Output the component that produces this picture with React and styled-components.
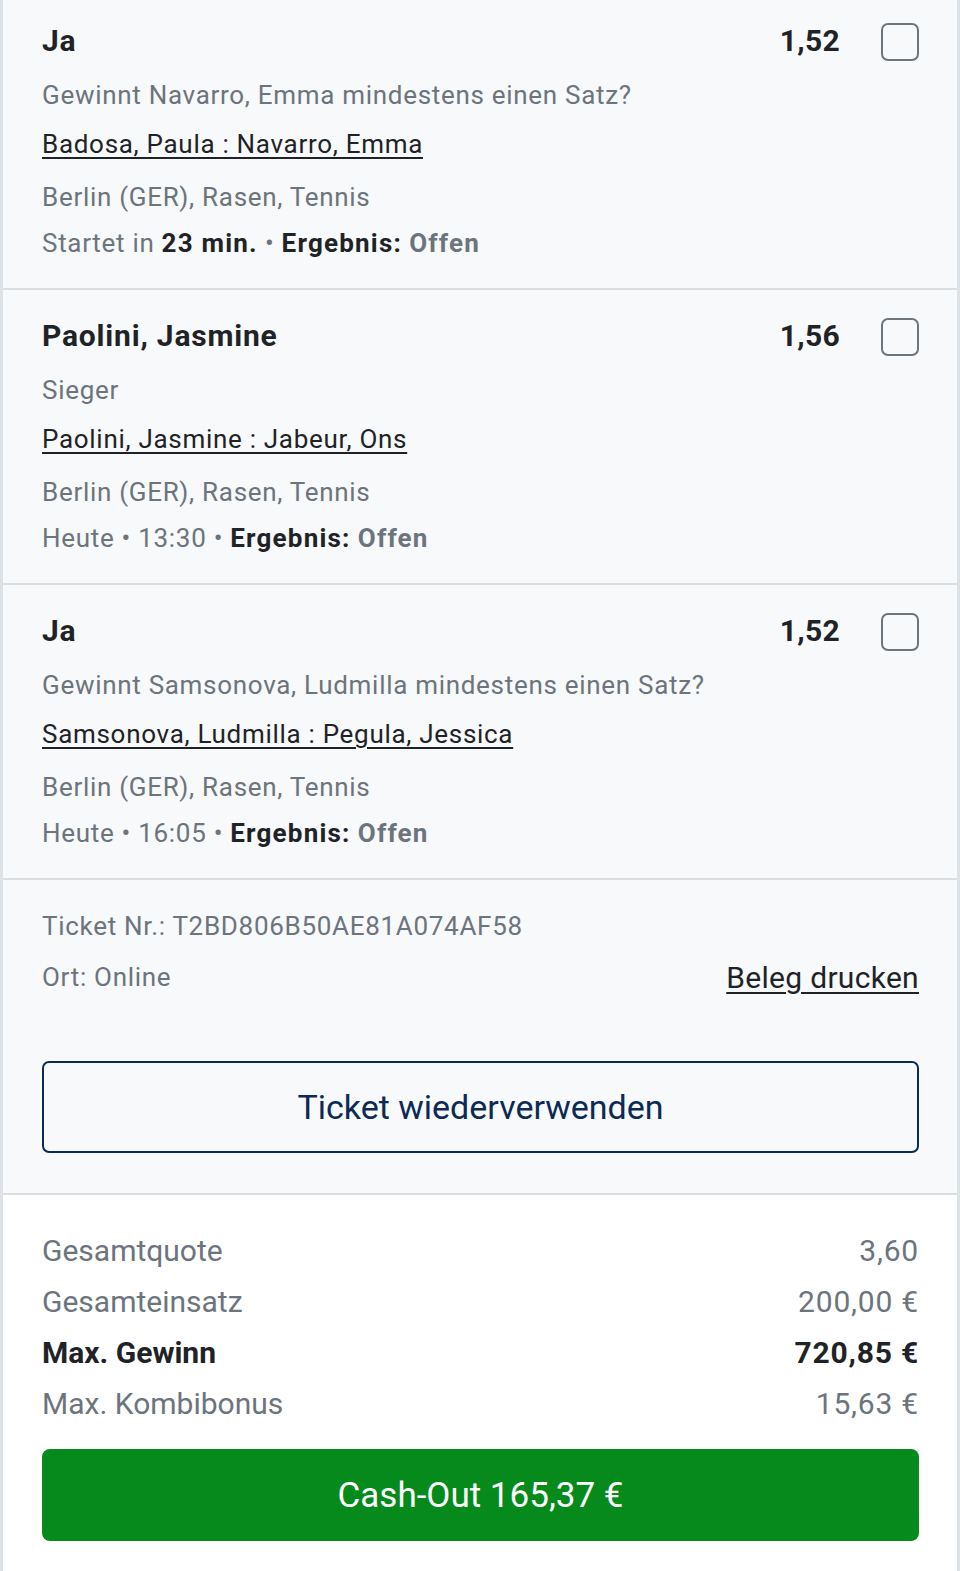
import React from "react";
import styled, { createGlobalStyle } from "styled-components";

const GlobalStyle = createGlobalStyle`
  body {
    margin: 0;
    background: #ffffff;
    font-family: Roboto, "Liberation Sans", Arial, sans-serif;
    color: #1f2327;
  }
`;

const Page = styled.div`
  width: 960px;
  overflow: hidden;
`;

const Ticket = styled.div`
  margin-top: -5px;
  border-left: 3px solid #dde2e6;
  border-right: 3px solid #dde2e6;
`;

const Item = styled.div`
  background: #f7f9fa;
  padding: 27px 38px 27px 39px;
  border-bottom: 2px solid #d9dee3;
  display: flex;
  flex-direction: column;
`;

const Head = styled.div`
  display: flex;
  align-items: center;
  height: 36px;
`;

const Title = styled.div`
  flex: 1;
  font-size: 30px;
  font-weight: 700;
  letter-spacing: 0.8px;
  color: #1f2327;
`;

const Odds = styled.div`
  font-size: 30px;
  font-weight: 700;
  letter-spacing: 0.3px;
  color: #1f2327;
  margin-right: 41px;
`;

const Check = styled.div`
  width: 34px;
  height: 34px;
  border: 2px solid #6c747c;
  border-radius: 7px;
  margin-top: 4px;
`;

const Line = styled.div`
  font-size: 26px;
  line-height: 36px;
  height: 36px;
  letter-spacing: 0.7px;
  color: ${(p) => (p.$dark ? "#1f2327" : "#6c747d")};
  margin-top: ${(p) => p.$gap}px;
  white-space: nowrap;
  text-decoration: ${(p) => (p.$link ? "underline" : "none")};
  text-underline-offset: 4px;
  text-decoration-thickness: 2px;
`;

const B = styled.b`
  font-weight: 700;
  letter-spacing: 1.2px;
  color: ${(p) => (p.$muted ? "#6c747d" : "#1f2327")};
`;

const Meta = styled.div`
  background: #f7f9fa;
  padding: 28px 38px 40px 39px;
  border-bottom: 2px solid #d9dee3;
`;

const MetaRow = styled.div`
  display: flex;
  justify-content: space-between;
  align-items: center;
  margin-top: ${(p) => p.$gap || 0}px;
`;

const PrintLink = styled.a`
  font-size: 30px;
  color: #1f2327;
  text-decoration: underline;
  text-decoration-thickness: 2px;
  text-underline-offset: 4px;
  letter-spacing: 0.3px;
`;

const OutlineButton = styled.button`
  display: flex;
  align-items: center;
  justify-content: center;
  width: 100%;
  height: 92px;
  margin-top: 66px;
  background: transparent;
  border: 2px solid #0c2a56;
  border-radius: 7px;
  color: #0c2a56;
  font-family: inherit;
  font-size: 34px;
  letter-spacing: 0;
`;

const Summary = styled.div`
  background: #ffffff;
  padding: 30px 38px 31px 39px;
`;

const SumRow = styled.div`
  display: flex;
  justify-content: space-between;
  align-items: center;
  height: 51px;
  font-size: 30px;
  letter-spacing: 0;
  font-weight: ${(p) => (p.$strong ? 700 : 400)};
  color: ${(p) => (p.$strong ? "#1f2327" : "#6c747d")};
`;

const SumValue = styled.span`
  letter-spacing: 0.8px;
`;

const CashOut = styled.button`
  display: flex;
  align-items: center;
  justify-content: center;
  width: 100%;
  height: 92px;
  margin-top: 20px;
  background: #058a1b;
  border: none;
  border-radius: 8px;
  color: #ffffff;
  font-family: inherit;
  font-size: 35px;
`;

const bets = [
  {
    title: "Ja",
    odds: "1,52",
    market: "Gewinnt Navarro, Emma mindestens einen Satz?",
    match: "Badosa, Paula : Navarro, Emma",
    time: (
      <>
        Startet in <B>23 min.</B> • <B>Ergebnis:</B> <B $muted>Offen</B>
      </>
    ),
  },
  {
    title: "Paolini, Jasmine",
    odds: "1,56",
    market: "Sieger",
    match: "Paolini, Jasmine : Jabeur, Ons",
    time: (
      <>
        Heute • 13:30 • <B>Ergebnis:</B> <B $muted>Offen</B>
      </>
    ),
  },
  {
    title: "Ja",
    odds: "1,52",
    market: "Gewinnt Samsonova, Ludmilla mindestens einen Satz?",
    match: "Samsonova, Ludmilla : Pegula, Jessica",
    time: (
      <>
        Heute • 16:05 • <B>Ergebnis:</B> <B $muted>Offen</B>
      </>
    ),
  },
];

const totals = [
  { label: "Gesamtquote", value: "3,60" },
  { label: "Gesamteinsatz", value: "200,00 €" },
  { label: "Max. Gewinn", value: "720,85 €", strong: true },
  { label: "Max. Kombibonus", value: "15,63 €" },
];

export default function App() {
  return (
    <Page>
      <GlobalStyle />
      <Ticket>
        {bets.map((bet, i) => (
          <Item key={i}>
            <Head>
              <Title>{bet.title}</Title>
              <Odds>{bet.odds}</Odds>
              <Check />
            </Head>
            <Line $gap={19}>{bet.market}</Line>
            <Line $gap={13} $dark $link>
              {bet.match}
            </Line>
            <Line $gap={17}>Berlin (GER), Rasen, Tennis</Line>
            <Line $gap={10}>{bet.time}</Line>
          </Item>
        ))}
        <Meta>
          <Line $gap={0}>Ticket Nr.: T2BD806B50AE81A074AF58</Line>
          <MetaRow $gap={15}>
            <Line $gap={0}>Ort: Online</Line>
            <PrintLink>Beleg drucken</PrintLink>
          </MetaRow>
          <OutlineButton>Ticket wiederverwenden</OutlineButton>
        </Meta>
        <Summary>
          {totals.map((t) => (
            <SumRow key={t.label} $strong={t.strong}>
              <span>{t.label}</span>
              <SumValue>{t.value}</SumValue>
            </SumRow>
          ))}
          <CashOut>Cash-Out 165,37 €</CashOut>
        </Summary>
      </Ticket>
    </Page>
  );
}
